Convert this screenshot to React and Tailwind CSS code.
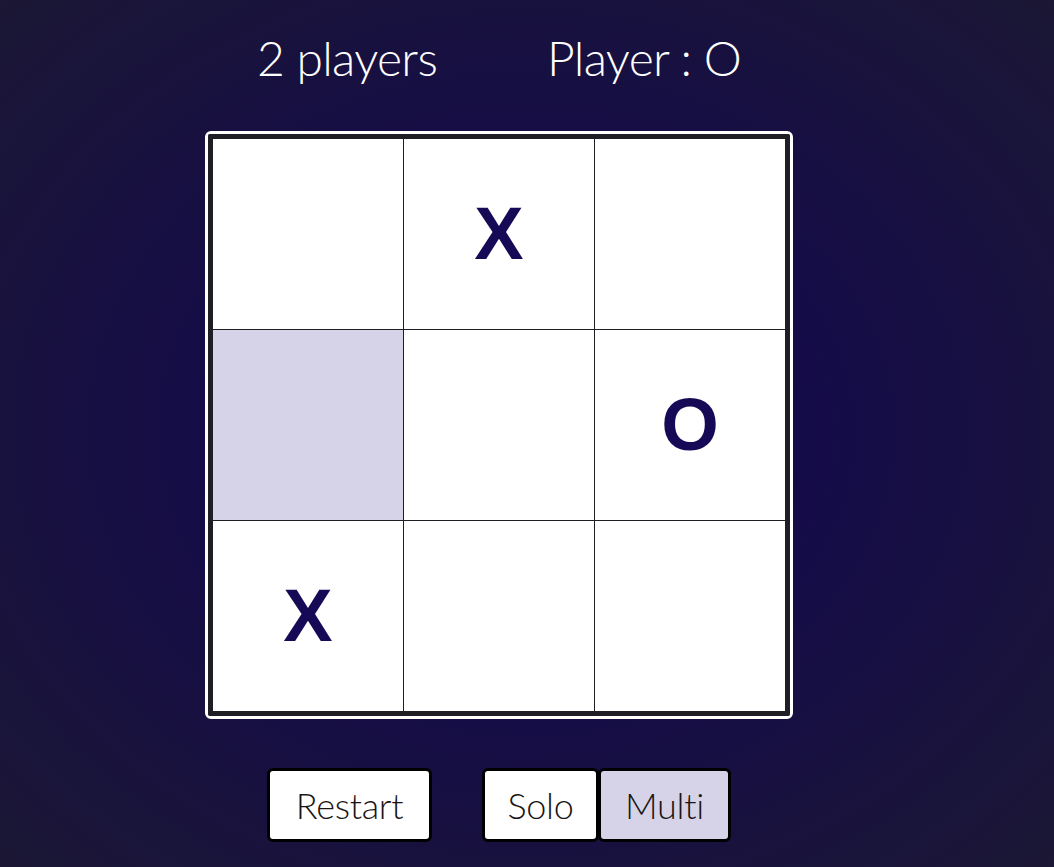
const board = ["", "X", "", "", "", "O", "X", "", ""];

function Cell({ value, highlight }) {
  return (
    <div
      className={`w-[190px] h-[190px] flex items-center justify-center ${
        highlight ? "bg-[#d6d3e8]" : "bg-white"
      }`}
    >
      <span className="text-[74px] font-bold leading-none text-[#160a57] font-['Liberation_Sans',Arial,sans-serif]">
        {value}
      </span>
    </div>
  );
}

export default function App() {
  return (
    <div className="min-h-screen bg-[radial-gradient(ellipse_at_center,#11084f_0%,#140b4a_35%,#1b1734_100%)] font-['Lato',sans-serif] font-light">
      <div className="w-[998px] flex flex-col items-center pt-[29px]">
        {/* Header */}
        <div className="flex items-center gap-[110px] text-[48px] leading-[1.2] tracking-[-0.7px] text-white">
          <p>2 players</p>
          <p>Player : O</p>
        </div>

        {/* Board */}
        <div className="mt-[44px] border-[3px] border-white rounded-md">
          <div className="border-[5px] border-[#1f1e24] bg-[#1f1e24] rounded-[2px]">
            <div className="grid grid-cols-3 gap-px">
              {board.map((v, i) => (
                <Cell key={i} value={v} highlight={i === 3} />
              ))}
            </div>
          </div>
        </div>

        {/* Controls */}
        <div className="mt-[49px] flex items-center gap-[50px] text-[36px] leading-none tracking-[-0.3px] text-[#1a1414]">
          <button className="w-[165px] h-[74px] bg-white border-[3px] border-black rounded-md font-light">
            Restart
          </button>
          <div className="flex">
            <button className="w-[117px] h-[74px] bg-white border-[3px] border-black rounded-md font-light">
              Solo
            </button>
            <button className="w-[133px] h-[74px] -ml-px bg-[#d6d3e8] border-[3px] border-black rounded-md font-light">
              Multi
            </button>
          </div>
        </div>
      </div>
    </div>
  );
}
